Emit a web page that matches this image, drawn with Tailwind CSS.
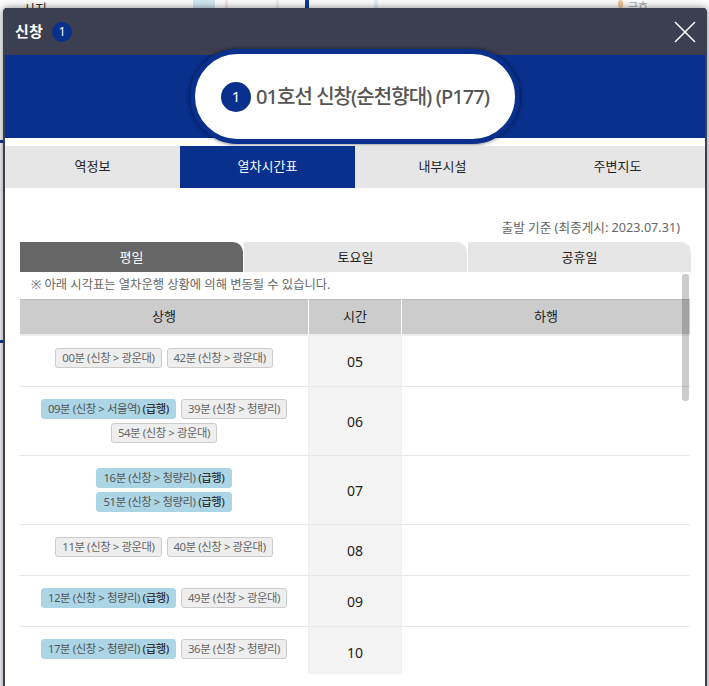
<!DOCTYPE html>
<html lang="ko">
<head>
  <meta charset="UTF-8" />
  <title>신창 열차시간표</title>
  <script src="https://cdn.jsdelivr.net/npm/@tailwindcss/browser@4"></script>
</head>
<body class="relative h-[686px] w-[709px] overflow-hidden bg-white font-['Noto_Sans','Noto_Sans_CJK_KR',sans-serif]">

  <!-- map behind the popup -->
  <div class="absolute left-[193px] top-0 h-[10px] w-[22px] bg-[#d3eaf4]"></div>
  <div class="absolute left-[225px] top-0 h-[10px] w-[3px] bg-[#f6e6ee]"></div>
  <div class="absolute left-[276px] top-0 h-[10px] w-[3px] bg-[#eeeeee]"></div>
  <div class="absolute left-[305px] top-0 h-[10px] w-[4px] bg-[#0a3a9c]"></div>
  <div class="absolute left-[374px] top-0 h-[10px] w-[4px] bg-[#dff0f6]"></div>
  <div class="absolute left-[23px] top-[1px] text-[13px] leading-[14px] text-[#333]">시지</div>
  <div class="absolute left-0 top-[140px] h-[3px] w-[3px] bg-[#0a3a9c]"></div>
  <div class="absolute left-0 top-[340px] h-[3px] w-[3px] bg-[#0a3a9c]"></div>
  <div class="absolute left-[618px] top-0 h-[8px] w-[5px] rounded-full bg-[#f4c9a0]"></div>
  <div class="absolute left-[628px] top-[1px] text-[11px] leading-[12px] text-[#aaa]">금호</div>

  <!-- popup -->
  <div class="absolute left-[3px] top-[8px] flex h-[700px] w-[704px] flex-col rounded-t-[4px] border-x-2 border-[#3b3f51] bg-white shadow-[0_0_8px_rgba(0,0,0,0.5)]">

    <div class="flex h-[47px] shrink-0 items-center justify-between bg-[#3b3f51] pl-[10px] pr-[9px]">
      <div class="flex items-center gap-[9px]">
        <span class="text-[15px] font-bold tracking-[0.3px] text-white">신창</span>
        <span class="flex h-[20px] w-[20px] items-center justify-center rounded-full bg-[#08308c] text-[12px] text-white">1</span>
      </div>
      <svg class="h-[22px] w-[22px]" viewBox="0 0 22 22" fill="none" stroke="#fff" stroke-width="1.5"><path d="M1 1l20 20M21 1L1 21" /></svg>
    </div>

    <div class="flex h-[83px] shrink-0 justify-center bg-[#08308c]">
      <div class="-mt-[6px] flex h-[95px] w-[330px] items-center gap-[5px] rounded-full border-[5px] border-[#08308c] bg-white pl-[26px] shadow-[0_0_4px_rgba(0,0,0,0.6)]">
        <span class="flex h-[30px] w-[30px] items-center justify-center rounded-full bg-[#08308c] text-[15px] text-white">1</span>
        <span class="text-[20px] font-medium tracking-[-0.95px] text-[#555]">01호선 신창(순천향대) (P177)</span>
      </div>
    </div>

    <div class="mt-[8px] grid h-[42px] shrink-0 grid-cols-4 bg-[#e6e6e6] text-[13px] text-[#222]">
      <div class="flex items-center justify-center">역정보</div>
      <div class="flex items-center justify-center bg-[#08308c] text-white">열차시간표</div>
      <div class="flex items-center justify-center">내부시설</div>
      <div class="flex items-center justify-center">주변지도</div>
    </div>

    <div class="px-[15px] pt-[30px]">
      <p class="pr-[10px] text-right text-[12.65px] leading-[18px] text-[#666]">출발 기준 (최종게시: 2023.07.31)</p>
      <div class="mt-[6px] grid h-[30px] w-[671px] grid-cols-3 gap-px text-[13px] text-[#222]">
        <div class="flex items-center justify-center rounded-tr-[10px] bg-[#666] pt-px text-white">평일</div>
        <div class="flex items-center justify-center rounded-t-[10px] rounded-tl-none bg-[#e6e6e6] pt-px">토요일</div>
        <div class="flex items-center justify-center rounded-t-[10px] rounded-tl-none bg-[#e6e6e6] pt-px">공휴일</div>
      </div>

      <div class="relative">
        <p class="h-[27px] pl-[11px] text-[12.3px] leading-[26px] text-[#666]">※ 아래 시각표는 열차운행 상황에 의해 변동될 수 있습니다.</p>

        <div class="grid w-[670px] grid-cols-[288px_94px_288px] text-center text-[13px] text-[#222]">
          <div class="flex h-[37px] items-center justify-center border-t border-b-2 border-t-[#bbb] border-b-[#eee] bg-[#ccc]">상행</div>
          <div class="flex h-[37px] items-center justify-center border-x border-t border-b-2 border-x-white border-t-[#bbb] border-b-[#eee] bg-[#ccc]">시간</div>
          <div class="flex h-[37px] items-center justify-center border-t border-b-2 border-t-[#bbb] border-b-[#eee] bg-[#ccc]">하행</div>

          <div class="flex h-[51px] flex-wrap content-start justify-center gap-x-[5px] border-b border-[#e8e8e8] pt-[12px]">
            <span class="h-[20px] rounded-[3px] border border-[#ccc] bg-[#eee] px-[6px] text-[11.35px] leading-[18px] tracking-[-0.4px] text-[#666]">00분 (신창 &gt; 광운대)</span>
            <span class="h-[20px] rounded-[3px] border border-[#ccc] bg-[#eee] px-[6px] text-[11.35px] leading-[18px] tracking-[-0.4px] text-[#666]">42분 (신창 &gt; 광운대)</span>
          </div>
          <div class="flex h-[51px] items-center justify-center border-x border-b border-x-[#eee] border-b-[#e8e8e8] bg-[#f4f4f4] text-[14px]">05</div>
          <div class="h-[51px] border-b border-[#e8e8e8]"></div>

          <div class="flex h-[69px] flex-wrap content-start justify-center gap-x-[5px] gap-y-[4px] border-b border-[#e8e8e8] pt-[12px]">
            <span class="h-[20px] rounded-[3px] border border-[#a9d5e4] bg-[#acd6e5] px-[6px] text-[11.35px] leading-[18px] tracking-[-0.4px] text-[#555]">09분 (신창 &gt; 서울역) <b class="font-medium text-[#333]">(급행)</b></span>
            <span class="h-[20px] rounded-[3px] border border-[#ccc] bg-[#eee] px-[6px] text-[11.35px] leading-[18px] tracking-[-0.4px] text-[#666]">39분 (신창 &gt; 청량리)</span>
            <span class="h-[20px] rounded-[3px] border border-[#ccc] bg-[#eee] px-[6px] text-[11.35px] leading-[18px] tracking-[-0.4px] text-[#666]">54분 (신창 &gt; 광운대)</span>
          </div>
          <div class="flex h-[69px] items-center justify-center border-x border-b border-x-[#eee] border-b-[#e8e8e8] bg-[#f4f4f4] text-[14px]">06</div>
          <div class="h-[69px] border-b border-[#e8e8e8]"></div>

          <div class="flex h-[69px] flex-col items-center gap-y-[4px] border-b border-[#e8e8e8] pt-[12px]">
            <span class="h-[20px] rounded-[3px] border border-[#a9d5e4] bg-[#acd6e5] px-[6px] text-[11.35px] leading-[18px] tracking-[-0.4px] text-[#555]">16분 (신창 &gt; 청량리) <b class="font-medium text-[#333]">(급행)</b></span>
            <span class="h-[20px] rounded-[3px] border border-[#a9d5e4] bg-[#acd6e5] px-[6px] text-[11.35px] leading-[18px] tracking-[-0.4px] text-[#555]">51분 (신창 &gt; 청량리) <b class="font-medium text-[#333]">(급행)</b></span>
          </div>
          <div class="flex h-[69px] items-center justify-center border-x border-b border-x-[#eee] border-b-[#e8e8e8] bg-[#f4f4f4] text-[14px]">07</div>
          <div class="h-[69px] border-b border-[#e8e8e8]"></div>

          <div class="flex h-[51px] flex-wrap content-start justify-center gap-x-[5px] border-b border-[#e8e8e8] pt-[12px]">
            <span class="h-[20px] rounded-[3px] border border-[#ccc] bg-[#eee] px-[6px] text-[11.35px] leading-[18px] tracking-[-0.4px] text-[#666]">11분 (신창 &gt; 광운대)</span>
            <span class="h-[20px] rounded-[3px] border border-[#ccc] bg-[#eee] px-[6px] text-[11.35px] leading-[18px] tracking-[-0.4px] text-[#666]">40분 (신창 &gt; 광운대)</span>
          </div>
          <div class="flex h-[51px] items-center justify-center border-x border-b border-x-[#eee] border-b-[#e8e8e8] bg-[#f4f4f4] text-[14px]">08</div>
          <div class="h-[51px] border-b border-[#e8e8e8]"></div>

          <div class="flex h-[51px] flex-wrap content-start justify-center gap-x-[5px] border-b border-[#e8e8e8] pt-[12px]">
            <span class="h-[20px] rounded-[3px] border border-[#a9d5e4] bg-[#acd6e5] px-[6px] text-[11.35px] leading-[18px] tracking-[-0.4px] text-[#555]">12분 (신창 &gt; 청량리) <b class="font-medium text-[#333]">(급행)</b></span>
            <span class="h-[20px] rounded-[3px] border border-[#ccc] bg-[#eee] px-[6px] text-[11.35px] leading-[18px] tracking-[-0.4px] text-[#666]">49분 (신창 &gt; 광운대)</span>
          </div>
          <div class="flex h-[51px] items-center justify-center border-x border-b border-x-[#eee] border-b-[#e8e8e8] bg-[#f4f4f4] text-[14px]">09</div>
          <div class="h-[51px] border-b border-[#e8e8e8]"></div>

          <div class="flex h-[47px] flex-wrap content-start justify-center gap-x-[5px] pt-[12px]">
            <span class="h-[20px] rounded-[3px] border border-[#a9d5e4] bg-[#acd6e5] px-[6px] text-[11.35px] leading-[18px] tracking-[-0.4px] text-[#555]">17분 (신창 &gt; 청량리) <b class="font-medium text-[#333]">(급행)</b></span>
            <span class="h-[20px] rounded-[3px] border border-[#ccc] bg-[#eee] px-[6px] text-[11.35px] leading-[18px] tracking-[-0.4px] text-[#666]">36분 (신창 &gt; 청량리)</span>
          </div>
          <div class="flex h-[47px] items-center justify-center border-x border-x-[#eee] bg-[#f4f4f4] pt-[4px] text-[14px]">10</div>
          <div class="h-[47px]"></div>
        </div>

        <!-- scrollbar thumb sits over the table -->
        <div class="absolute right-[1px] top-[2px] h-[127px] w-[7px] rounded-[3px] bg-black/20"></div>
      </div>
    </div>
  </div>
</body>
</html>
